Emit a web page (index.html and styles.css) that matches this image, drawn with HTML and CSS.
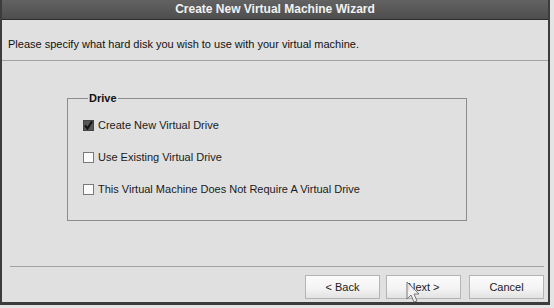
FILE: index.html
```html
<!DOCTYPE html>
<html lang="en">

<head>
    <meta charset="UTF-8">
    <meta name="viewport" content="width=device-width, initial-scale=1.0">
    <title>Create New Virtual Machine Wizard</title>
    <link rel="stylesheet" href="styles.css">
</head>

<body>

    <div class="window">
        <!-- Title bar -->
        <div class="titlebar">Create New Virtual Machine Wizard</div>

        <!-- Page description -->
        <div class="header">Please specify what hard disk you wish to use with your virtual machine.</div>

        <!-- Drive options -->
        <div class="content">
            <fieldset class="group">
                <legend>Drive</legend>
                <label class="option">
                    <span class="box checked">
                        <svg width="9" height="9" viewBox="0 0 9 9">
                            <path d="M1 4.5 L3.5 7.5 L8 0.5" fill="none" stroke="#111" stroke-width="2"/>
                        </svg>
                    </span>
                    Create New Virtual Drive
                </label>
                <label class="option">
                    <span class="box"></span>
                    Use Existing Virtual Drive
                </label>
                <label class="option">
                    <span class="box"></span>
                    This Virtual Machine Does Not Require A Virtual Drive
                </label>
            </fieldset>
        </div>

        <!-- Navigation buttons -->
        <div class="footer">
            <button class="btn">&lt; Back</button>
            <button class="btn">Next &gt;</button>
            <button class="btn cancel">Cancel</button>
        </div>

        <!-- Mouse pointer over the Next button -->
        <svg class="cursor" width="16" height="24" viewBox="0 0 16 24">
            <path d="M1 1 L1 18 L5 14 L8 21 L11 20 L8 13 L13 13 Z" fill="#f4f4f4" fill-opacity="0.85" stroke="#777" stroke-width="1"/>
        </svg>
    </div>

</body>

</html>
```

FILE: styles.css
```css
body {
    margin: 0;
    background-color: #e4e4e4;
    font-family: "Liberation Sans", Arial, sans-serif;
    font-size: 11px;
    color: #111;
}

.window {
    position: relative;
    width: 546px;
    height: 302px;
    border-left: 2px solid #3c3c3c;
    border-right: 2px solid #3c3c3c;
    border-bottom: 3px solid #3c3c3c;
    background-color: #e0e0e0;
}

.titlebar {
    height: 19px;
    line-height: 19px;
    text-align: center;
    font-size: 12px;
    font-weight: bold;
    color: #f2f2f2;
    background: linear-gradient(#626262, #4e4e4e);
    border-bottom: 1px solid #2c2c2c;
}

.header {
    height: 41px;
    padding-left: 6px;
    line-height: 49px;
    border-bottom: 1px solid #a2a2a2;
    box-sizing: border-box;
}

.content {
    height: 205px;
    padding-top: 31px;
    padding-left: 65px;
    box-sizing: border-box;
}

/* Group box */
.group {
    width: 400px;
    height: 129px;
    margin: 0;
    padding: 14px 0 0 15px;
    box-sizing: border-box;
    border: 1px solid #8c8c8c;
    display: flex;
    flex-direction: column;
    gap: 19px;
}

.group legend {
    margin-left: 5px;
    padding: 0 1px;
    font-weight: bold;
    font-size: 11px;
    line-height: 13px;
}

.option {
    display: flex;
    align-items: center;
    height: 13px;
    line-height: 13px;
    color: #1a1a1a;
}

.box {
    width: 9px;
    height: 9px;
    margin-right: 4px;
    border: 1px solid #7a7a7a;
    background-color: #fafafa;
    display: flex;
    align-items: center;
    justify-content: center;
}

.box.checked {
    background-color: #555;
    border-color: #444;
}

/* Footer with buttons */
.footer {
    margin: 0 4px 0 8px;
    border-top: 1px solid #a2a2a2;
    padding-top: 8px;
    display: flex;
    justify-content: flex-end;
    gap: 6px;
}

.btn {
    width: 75px;
    height: 24px;
    padding: 0;
    font-family: "Liberation Sans", Arial, sans-serif;
    font-size: 11px;
    color: #1a1a1a;
    border: 1px solid #b4b4b4;
    background: linear-gradient(#fbfbfb 0%, #f4f4f4 55%, #e2e2e2 100%);
}

.btn.cancel {
    margin-left: 2px;
}

.cursor {
    position: absolute;
    left: 404px;
    top: 281px;
}
```
